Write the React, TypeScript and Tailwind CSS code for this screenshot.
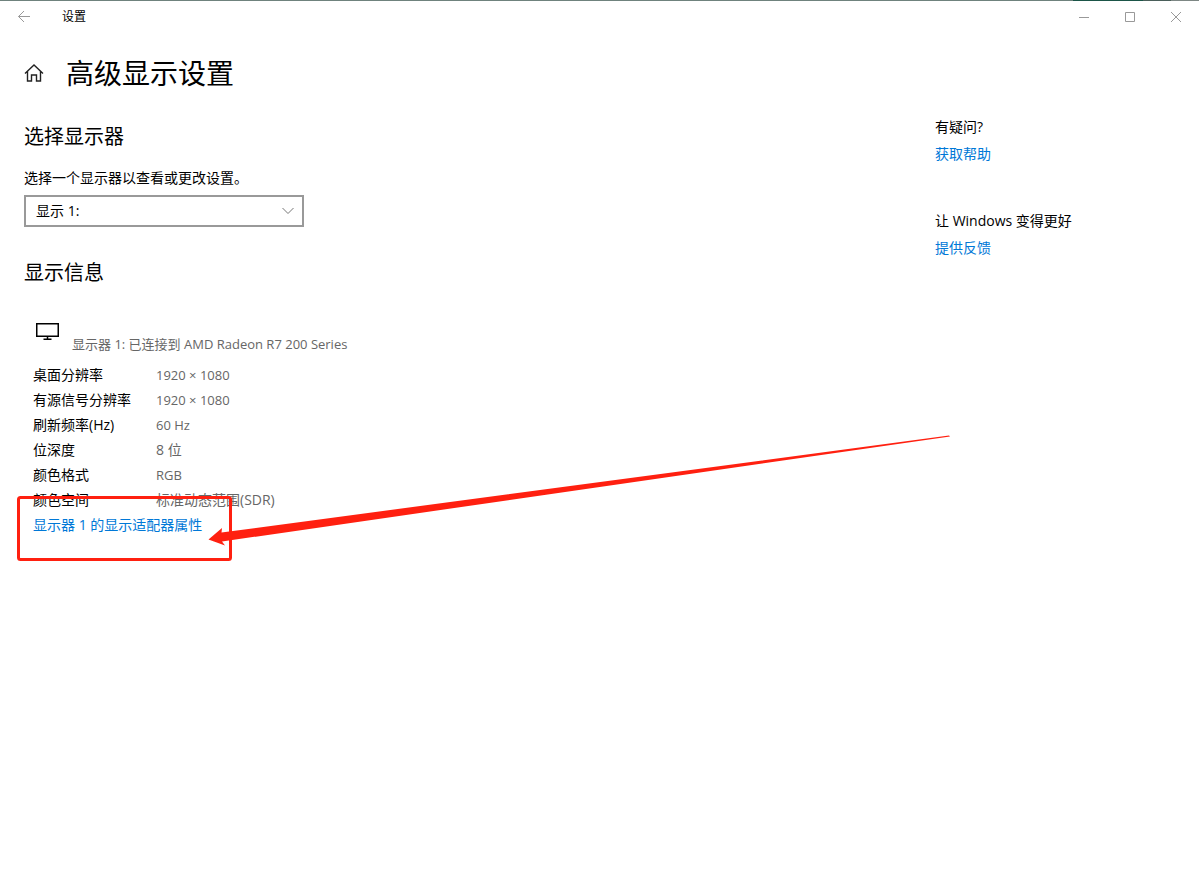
import type { ReactNode } from "react";

const DETAILS = [
  { label: "桌面分辨率", value: "1920 × 1080", size: "text-[13px]" },
  { label: "有源信号分辨率", value: "1920 × 1080", size: "text-[13px]" },
  { label: "刷新频率(Hz)", value: "60 Hz", size: "text-[13px]" },
  { label: "位深度", value: "8 位", size: "text-sm" },
  { label: "颜色格式", value: "RGB", size: "text-[13px]" },
  { label: "颜色空间", value: "标准动态范围(SDR)", size: "text-sm" },
];

function TitleBar() {
  return (
    <header className="text-[#999999]">
      <div className="flex h-px bg-[#6f827d]">
        <div className="ml-auto w-[70px] bg-[#1b5548]" />
        <div className="w-7 bg-[#4a5f5a]" />
        <div className="w-7 bg-[#7d8784]" />
      </div>
      <div className="flex h-8 items-center justify-between">
        <div className="flex items-center">
          <button type="button" aria-label="返回" className="flex h-8 w-12 items-center justify-center">
            <svg width="12" height="12" viewBox="0 0 12 12" fill="none" stroke="currentColor">
              <path d="M12 5.500H.5M6 0L.5 5.500L6 11" />
            </svg>
          </button>
          <span className="ml-3.5 text-xs text-black">设置</span>
        </div>
        <div className="flex">
          <button type="button" aria-label="最小化" className="flex h-8 w-[46px] items-center justify-center">
            <svg width="10" height="10" viewBox="0 0 10 10" stroke="currentColor">
              <path d="M0 5.500h10" />
            </svg>
          </button>
          <button type="button" aria-label="最大化" className="flex h-8 w-[46px] items-center justify-center">
            <svg width="10" height="10" viewBox="0 0 10 10" fill="none" stroke="currentColor">
              <path d="M.5 .5h9v9h-9z" />
            </svg>
          </button>
          <button type="button" aria-label="关闭" className="flex h-8 w-[46px] items-center justify-center">
            <svg width="10" height="10" viewBox="0 0 10 10" stroke="currentColor">
              <path d="M0 0l10 10M10 0L0 10" />
            </svg>
          </button>
        </div>
      </div>
    </header>
  );
}

function HelpBlock({ title, children }: { title: string; children: ReactNode }) {
  return (
    <div>
      <p className="leading-5">{title}</p>
      <a href="#" className="mt-[7px] block leading-5 text-[#0078d7]">
        {children}
      </a>
    </div>
  );
}

function Annotation() {
  return (
    <svg
      className="pointer-events-none absolute top-0 left-0"
      width="960"
      height="570"
      viewBox="0 0 960 570"
      aria-hidden="true"
    >
      <rect x="18.500" y="497.500" width="212" height="62" rx="2" fill="none" stroke="#ff2010" strokeWidth="3" />
      <path d="M208.500 539.500L222 528L221.500 532.500L949 435.500L950 436.500L222 541.500L225 545.500Z" fill="#ff2010" />
    </svg>
  );
}

export default function App() {
  return (
    <div className="relative min-h-screen bg-white font-['Open_Sans','Noto_Sans_CJK_SC',sans-serif] text-sm text-black">
      <TitleBar />
      <div className="flex items-center px-6 pt-[19px]">
        <a href="#" aria-label="主页" className="text-[#222222]">
          <svg width="20" height="18" viewBox="0 0 20 18" fill="none" stroke="currentColor" strokeWidth="1.400">
            <path d="M1 9.500L10 1l9 8.500M3.500 7.500v9.500h4v-6h5v6h4V7.500" />
          </svg>
        </a>
        <h1 className="ml-[22px] text-[28px] leading-[42px]">高级显示设置</h1>
      </div>

      <div className="flex justify-between px-6 pt-[23px]">
        <main className="min-w-0 pt-1">
          <h2 className="text-xl leading-8">选择显示器</h2>
          <label htmlFor="monitor" className="mt-[15px] block leading-5">
            选择一个显示器以查看或更改设置。
          </label>
          <div className="relative mt-[7px] w-[280px]">
            <select
              id="monitor"
              className="block h-8 w-full appearance-none border-2 border-[#999999] bg-white px-2.5 text-sm"
            >
              <option>显示 1:</option>
            </select>
            <svg
              className="pointer-events-none absolute top-3 right-2.5 text-[#777777]"
              width="12"
              height="8"
              viewBox="0 0 12 8"
              fill="none"
              stroke="currentColor"
            >
              <path d="M.5 1L6 6.500L11.500 1" />
            </svg>
          </div>

          <h2 className="mt-[30px] text-xl leading-8">显示信息</h2>
          <div className="mt-8 flex items-start pl-3 text-[#666666]">
            <svg className="mt-0.5 text-black" width="24" height="18" viewBox="0 0 24 18" fill="none" stroke="currentColor">
              <path d="M.75 .75h21.500v12.500H.75zM11.500 13v3.500M7.500 16.250h8" strokeWidth="1.500" />
            </svg>
            <p className="mt-[13px] ml-3 text-[13px] leading-5">显示器 1: 已连接到 AMD Radeon R7 200 Series</p>
          </div>
          <table className="mt-2 ml-[9px] text-left">
            <tbody>
              {DETAILS.map((d) => (
                <tr key={d.label} className="h-[25px]">
                  <th scope="row" className="w-[123px] p-0 leading-5 font-normal whitespace-nowrap">
                    {d.label}
                  </th>
                  <td className={`p-0 leading-5 whitespace-nowrap text-[#666666] ${d.size}`}>{d.value}</td>
                </tr>
              ))}
            </tbody>
          </table>
          <a href="#" className="mt-[3px] ml-[9px] inline-block leading-5 text-[#0078d7]">
            显示器 1 的显示适配器属性
          </a>
        </main>

        <aside className="flex w-60 shrink-0 flex-col gap-[47px]">
          <HelpBlock title="有疑问?">获取帮助</HelpBlock>
          <HelpBlock title="让 Windows 变得更好">提供反馈</HelpBlock>
        </aside>
      </div>
      <Annotation />
    </div>
  );
}
